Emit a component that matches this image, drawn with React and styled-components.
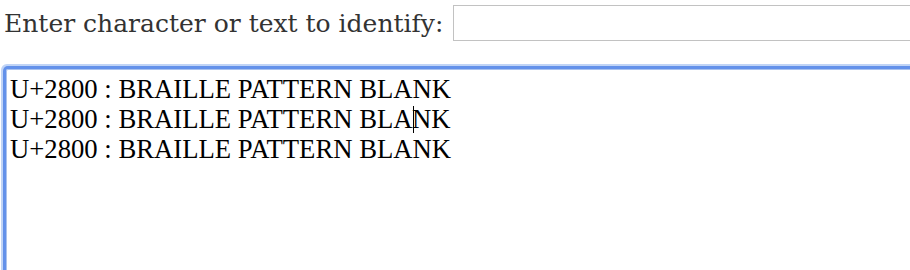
import React from 'react'
import styled, { createGlobalStyle } from 'styled-components'

const Global = createGlobalStyle`
    html, body {
        margin: 0;
        padding: 0;
        background: #fff;
        overflow: hidden;
    }
`

const Page = styled.div`
    width: 910px;
    height: 270px;
    display: flex;
    flex-direction: column;
    gap: 28px;
    padding: 5px 0 0 0;
    box-sizing: border-box;
    overflow: hidden;
`

const Row = styled.div`
    display: flex;
    align-items: center;
    gap: 10px;
    padding-left: 4px;
`

const Label = styled.label`
    font-family: "DejaVu Serif", Georgia, serif;
    font-size: 25px;
    color: #333;
    white-space: nowrap;
`

const Field = styled.input`
    flex: 1;
    height: 36px;
    margin-right: -20px;
    border: 1px solid #c2c2c2;
    box-sizing: border-box;
    outline: none;
`

const Output = styled.div`
    margin-left: 6px;
    flex: 1;
    margin-right: -20px;
    margin-bottom: -20px;
    border: 1px solid #a9c2ef;
    border-radius: 2px;
    box-shadow: 0 0 0 3px #6391ea, 0 0 0 5px #c0d4f6;
    padding: 4px 0 0 3px;
    font-family: "Liberation Serif", "Times New Roman", serif;
    font-size: 26.7px;
    line-height: 30px;
    color: #000;
`

const Line = styled.div`
    white-space: pre;
`

const Caret = styled.span`
    display: inline-block;
    width: 0;
    height: 27px;
    border-left: 1.5px solid #000;
    vertical-align: -5px;
    margin-right: -1.5px;
`

const lines = [
    'U+2800 : BRAILLE PATTERN BLANK',
    ['U+2800 : BRAILLE PATTERN BLA', 'NK'],
    'U+2800 : BRAILLE PATTERN BLANK',
]

export default function App() {
    return (
        <>
            <Global />
            <Page>
                <Row>
                    <Label htmlFor="q">Enter character or text to identify:</Label>
                    <Field id="q" type="text" />
                </Row>
                <Output>
                    {lines.map((l, i) =>
                        Array.isArray(l)
                            ? <Line key={i}>{l[0]}<Caret />{l[1]}</Line>
                            : <Line key={i}>{l}</Line>
                    )}
                </Output>
            </Page>
        </>
    )
}
